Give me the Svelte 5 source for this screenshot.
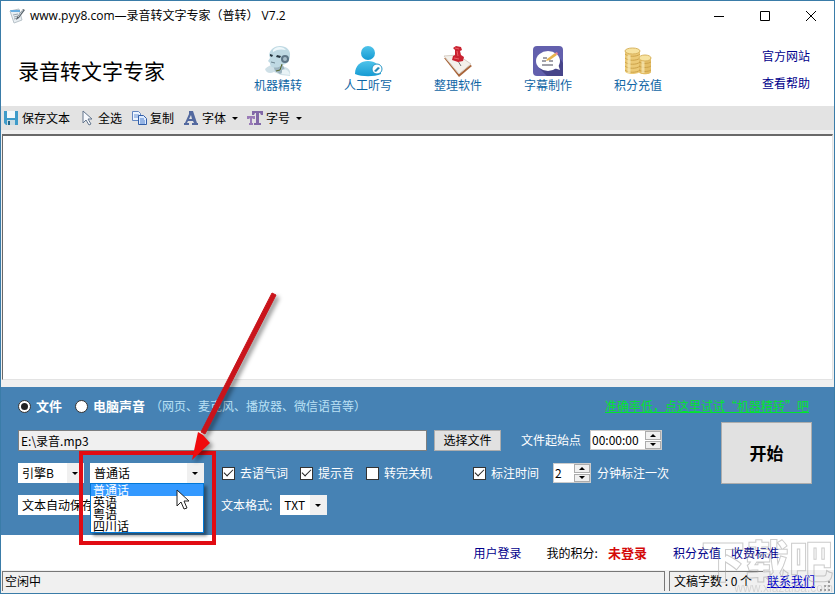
<script>
  const languages = ['普通话', '英语', '粤语', '四川话']

  let language = $state('普通话')
  let open = $state(true)
  let source = $state('file')
  let filePath = $state('E:\\录音.mp3')
  let startAt = $state('00:00:00')
  let interval = $state(2)
  let skipFillers = $state(true)
  let beep = $state(true)
  let shutdown = $state(false)
  let markTime = $state(true)
  let content = $state('')

  function pick(name) {
    language = name
    open = false
  }

  function shiftStart(step) {
    const [h, m, s] = startAt.split(':').map(Number)
    const total = Math.max(0, h * 3600 + m * 60 + s + step)
    startAt = [Math.floor(total / 3600), Math.floor(total / 60) % 60, total % 60]
      .map((n) => String(n).padStart(2, '0'))
      .join(':')
  }
</script>

{#snippet spinner(up, down)}
  <span class="spin">
    <button type="button" aria-label="增加" onclick={up}><i class="tri tri--up"></i></button>
    <button type="button" aria-label="减少" onclick={down}><i class="tri"></i></button>
  </span>
{/snippet}

<div class="window">
  <header class="titlebar">
    <svg width="16" height="16" viewBox="0 0 16 16" aria-hidden="true">
      <path d="M1 3 10 1l3 11-8 3z" fill="#e8eef2" stroke="#b9c3ca" />
      <path d="M1 2h10v2H2z" fill="#69aee0" />
      <path d="m4 7 5-1M5 9l4-1M5 11l4-1" stroke="#9aa6ae" />
      <path d="m7 12 1-3 6-8 2 1-6 8z" fill="#59636b" />
      <path d="m9 9 5-7" stroke="#c9d2d8" />
    </svg>
    <span class="titlebar__text">www.pyy8.com—录音转文字专家（普转） V7.2</span>
    <div class="titlebar__controls">
      <button type="button" aria-label="最小化">
        <svg width="12" height="12"><path d="M1 6.5h10" stroke="#000" /></svg>
      </button>
      <button type="button" aria-label="最大化">
        <svg width="12" height="12"><path d="M1.5 1.5h9v9h-9z" fill="none" stroke="#000" /></svg>
      </button>
      <button type="button" aria-label="关闭">
        <svg width="12" height="12"><path d="m1 1 10 10M11 1 1 11" stroke="#000" /></svg>
      </button>
    </div>
  </header>

  <div class="banner">
    <h1>录音转文字专家</h1>
    <nav class="features">
      <a href="#robot">
        <svg width="32" height="32" viewBox="0 0 32 32" aria-hidden="true">
          <path d="M3 24c3-4 9-5 13-4l7 2c4 1 6 4 5 9l-9-1-7-3c-4 2-8 1-9-3z" fill="#cfe0e7" />
          <path d="M11 20c4 2 6 1 9-2l3 7-5 4-5-3z" fill="#9db4bf" />
          <path d="M7 10C8 4 13 1 18 1c6 0 11 4 10 10 0 5-4 9-8 9-3 3-7 3-10 2-2-1-2-3-2-4l-2-2 2-3z" fill="#bfd9e3" />
          <path d="M11 5c3-4 10-4 13 0-4-1-9-1-13 2z" fill="#eff8fb" />
          <path d="m8 9 3 1-1 2-2-1zm7 1 4 1-1 2-4-1z" fill="#25343e" />
          <path d="m9 17 4 1" stroke="#6c8490" />
          <circle cx="23" cy="14" r="4" fill="#5d7586" />
          <circle cx="23" cy="14" r="2" fill="#a7bdca" />
          <path d="m20 19-2 6-4 1" fill="none" stroke="#56672c" stroke-width="1" />
          <path d="M20 25c3-2 7 0 8 5l-8-1z" fill="#e9f3f6" />
        </svg>
        机器精转
      </a>
      <a href="#manual">
        <svg width="32" height="32" viewBox="0 0 32 32" aria-hidden="true">
          <defs>
            <linearGradient id="person" x2="0" y2="1">
              <stop stop-color="#4fc3ea" /><stop offset="1" stop-color="#159bd3" />
            </linearGradient>
          </defs>
          <circle cx="16" cy="8" r="7" fill="url(#person)" />
          <path d="M3 29c0-9 6-13 13-13s13 4 13 13c-7 3-19 3-26 0z" fill="url(#person)" />
          <circle cx="25" cy="24" r="5" fill="#fff" stroke="#2998c7" />
          <path d="m22 26 4-4 2 1-4 4z" fill="#2488b5" />
        </svg>
        人工听写
      </a>
      <a href="#tidy">
        <svg width="32" height="32" viewBox="0 0 32 32" aria-hidden="true">
          <path d="m2 13 14-1 14 9-13 11z" fill="#a9653a" />
          <path d="m2 11 14-1 13 9-12 10z" fill="#f4f1eb" stroke="#d7cec5" />
          <path d="m16 16 3 5" stroke="#777" />
          <path d="m11 3 3-2 5 1 1 3-2 1 1 4 3 2-1 4-5 1-6-2 1-4 2-1v-5z" fill="#c92230" />
          <path d="m13 3 4 1M15 6l1 5M12 13l5 1" stroke="#ec6066" />
        </svg>
        整理软件
      </a>
      <a href="#subtitle">
        <svg width="32" height="32" viewBox="0 0 32 32" aria-hidden="true">
          <rect x="1" y="1" width="30" height="30" rx="4" fill="#6360ad" />
          <path d="m7 23 8 8h16V18l-4-6z" fill="#47458a" />
          <ellipse cx="16" cy="16" rx="12" ry="10" fill="#fff" />
          <path d="m22 23 6 2-2-6z" fill="#fff" />
          <path d="M11 13h4m-5 3h4m3 0h4m-11 4h11" stroke="#434353" />
          <path d="m15 14 8-6 2 2-7 5-4 1z" fill="#e7b34c" />
          <path d="m23 8 2-1 1 2-1 1z" fill="#ee8190" />
        </svg>
        字幕制作
      </a>
      <a href="#credits">
        <svg width="32" height="32" viewBox="0 0 32 32" aria-hidden="true">
          <path d="M3 6v20c0 4 15 4 15 0V6z" fill="#ecca76" />
          <path d="M17 13v14c0 3 12 3 12 0V13z" fill="#e3bd65" />
          <path d="M3 9c3 3 12 3 15 0M3 13c3 3 12 3 15 0M3 17c3 3 12 3 15 0M3 21c3 3 12 3 15 0M3 25c3 3 12 3 15 0M17 17c3 2 9 2 12 0M17 21c3 2 9 2 12 0M17 25c3 2 9 2 12 0" fill="none" stroke="#cda34a" />
          <path d="M7 10v18M21 16v12" stroke="#faedbd" stroke-width="3" opacity="0.7" />
          <ellipse cx="10.5" cy="6" rx="7.5" ry="3" fill="#f7e3a0" stroke="#d9b45f" />
          <ellipse cx="23" cy="13" rx="6" ry="3" fill="#f7e3a0" stroke="#d9b45f" />
        </svg>
        积分充值
      </a>
    </nav>
    <div class="banner__links">
      <a href="#site">官方网站</a>
      <a href="#help">查看帮助</a>
    </div>
  </div>

  <div class="toolbar" role="toolbar">
    <button type="button">
      <svg width="16" height="16" viewBox="0 0 16 16" aria-hidden="true">
        <path d="M1 1h14v14H3l-2-2z" fill="#3e9bc9" />
        <path d="M4 1h8v7H4z" fill="#f3f8fa" />
        <path d="M4 10h8v5H4z" fill="#c8dbe3" /><path d="M5 11h2v4H5z" fill="#23668a" />
      </svg>
      保存文本
    </button>
    <button type="button">
      <svg width="16" height="16" viewBox="0 0 16 16" aria-hidden="true">
        <path d="M4 1v12l3-3 3 5 2-1-3-5h4z" fill="#f7f9fd" stroke="#62758d" />
      </svg>
      全选
    </button>
    <button type="button">
      <svg width="16" height="16" viewBox="0 0 16 16" aria-hidden="true">
        <path d="M1.5 1.5h6l2 2v7h-8z" fill="#edf5ff" stroke="#6387c1" />
        <path d="M3 5h5M3 7h5" stroke="#6a93d3" />
        <path d="M7.5 5.5h5l3 3v6h-8z" fill="#dceaff" stroke="#315ea8" />
        <path d="M9 9h4m-4 2h5m-5 2h5" stroke="#4f7ec9" />
      </svg>
      复制
    </button>
    <button type="button">
      <svg width="16" height="16" viewBox="0 0 16 16" aria-hidden="true">
        <path d="M6 1h4l4 12h1v2H9v-2h2l-1-2H5l-1 2h2v2H1v-2h1L6 4zm2 4-2 4h3z" fill="#53699f" />
      </svg>
      字体<i class="tri"></i>
    </button>
    <button type="button">
      <svg width="16" height="16" viewBox="0 0 16 16" aria-hidden="true">
        <path d="M5 1h11v4h-2l-1-2h-1v10h2v2H7v-2h2V3H8L7 5H5z" fill="#8268a8" />
        <path d="M0 6h8v3H6L5 8v5h1v2H2v-2h1V8L2 9H0z" fill="#9a7bb8" />
      </svg>
      字号<i class="tri"></i>
    </button>
  </div>

  <textarea class="editor" aria-label="文本" bind:value={content}></textarea>

  <main class="panel">
    <div class="row row--source">
      <label class="bold"><input type="radio" value="file" bind:group={source} />文件</label>
      <label class="bold"><input type="radio" value="system" bind:group={source} />电脑声音</label>
      <span class="hint">（网页、麦克风、播放器、微信语音等）</span>
      <a class="tip" href="#robot">准确率低，点这里试试“机器精转”吧</a>
    </div>

    <div class="panel__body">
      <div class="settings">
        <div class="row row--file">
          <input class="path" type="text" aria-label="文件路径" bind:value={filePath} />
          <button class="btn" type="button">选择文件</button>
          <label class="start-label" for="start-at">文件起始点</label>
          <span class="stepper stepper--time">
            <input id="start-at" type="text" bind:value={startAt} />
            {@render spinner(() => shiftStart(1), () => shiftStart(-1))}
          </span>
        </div>

        <div class="row row--options">
          <span class="select select--engine">
            <select aria-label="引擎"><option>引擎B</option><option>引擎A</option></select>
            <i class="tri"></i>
          </span>
          <div class="combo">
            <button
              class="combo__value"
              type="button"
              aria-haspopup="listbox"
              aria-expanded={open}
              onclick={() => (open = !open)}
            >
              {language}<i class="tri"></i>
            </button>
            {#if open}
              <div class="combo__list" role="listbox" aria-label="语言">
                {#each languages as name}
                  <button
                    type="button"
                    role="option"
                    aria-selected={name === language}
                    class:active={name === language}
                    onclick={() => pick(name)}>{name}</button
                  >
                {/each}
              </div>
            {/if}
            <span class="highlight"></span>
            <svg class="pointer" width="14" height="21" viewBox="0 0 14 21" aria-hidden="true">
              <path d="M1 1v16l4-4 3 7 3-1-3-7h5z" fill="#fff" stroke="#222" />
            </svg>
            <svg class="arrow" width="100" height="180" viewBox="0 0 100 180" aria-hidden="true">
              <path d="m92 9-2-1-71 139 4 2L94 10z" fill="#c9141b" stroke="#c9141b" stroke-linejoin="round" />
              <path d="m10 175 6-28 5 3 7 8z" fill="#f00a0c" />
            </svg>
          </div>
          <div class="checks">
            <label><input type="checkbox" bind:checked={skipFillers} />去语气词</label>
            <label><input type="checkbox" bind:checked={beep} />提示音</label>
            <label><input type="checkbox" bind:checked={shutdown} />转完关机</label>
          </div>
          <div class="marks">
            <label><input type="checkbox" bind:checked={markTime} />标注时间</label>
            <span class="stepper stepper--count">
              <input id="interval" type="text" bind:value={interval} />
              {@render spinner(() => interval++, () => (interval = Math.max(1, interval - 1)))}
            </span>
            <label for="interval">分钟标注一次</label>
          </div>
        </div>

        <div class="row row--format">
          <span class="select select--save">
            <select aria-label="自动保存"><option>文本自动保存</option></select>
            <i class="tri"></i>
          </span>
          <label for="format">文本格式:</label>
          <span class="select select--format">
            <select id="format"><option>TXT</option><option>DOC</option></select>
            <i class="tri"></i>
          </span>
        </div>
      </div>
      <button class="btn btn--start" type="button">开始</button>
    </div>
  </main>

  <div class="account">
    <a href="#login">用户登录</a>
    <span class="account__credits">我的积分: <strong>未登录</strong></span>
    <a href="#credits">积分充值</a>
    <a href="#pricing">收费标准</a>
  </div>

  <footer class="status">
    <span class="status__cell status__cell--main">空闲中</span>
    <span class="status__cell status__cell--count">文稿字数 : {content.length} 个</span>
    <a href="#contact">联系我们</a>
    <svg class="grip" width="12" height="12" aria-hidden="true">
      <path d="M9 1h2v2H9zM5 5h2v2H5zm4 0h2v2H9zM1 9h2v2H1zm4 0h2v2H5zm4 0h2v2H9z" fill="#999" />
    </svg>
  </footer>

  <div class="watermark" aria-hidden="true">
    <span class="watermark__name">下载吧</span>
    <span class="watermark__url">www.xiazaiba.com</span>
  </div>
</div>

<style>
  :global(body) {
    margin: 0;
    background: #fff;
  }

  .window,
  .window * {
    box-sizing: border-box;
  }

  .window {
    position: relative;
    display: flex;
    flex-direction: column;
    min-height: 100vh;
    overflow: hidden;
    border: 1px solid #3a7ca8;
    background: #fff;
    color: #000;
    font: 12px/16px 'Noto Sans CJK SC', sans-serif;
  }

  button,
  input,
  select,
  textarea {
    margin: 0;
    padding: 0;
    border: 0;
    border-radius: 0;
    background: none;
    color: inherit;
    font: inherit;
  }

  a {
    color: #00008b;
    text-decoration: none;
  }

  label {
    display: flex;
    align-items: center;
    gap: 5px;
    white-space: nowrap;
  }

  .tri {
    width: 0;
    height: 0;
    border: 3px solid transparent;
    border-top-color: #000;
    border-bottom: 0;
  }

  .tri--up {
    border-top: 0;
    border-bottom: 3px solid #000;
  }

  .titlebar {
    display: flex;
    align-items: center;
    height: 30px;
    padding-left: 8px;
  }

  .titlebar__text {
    margin-left: 5px;
    font-family: 'Open Sans', 'Noto Sans CJK SC', sans-serif;
    white-space: pre;
  }

  .titlebar__controls {
    display: flex;
    margin-left: auto;
  }

  .titlebar__controls button {
    display: grid;
    place-items: center;
    width: 46px;
    height: 28px;
  }

  .banner {
    display: flex;
    height: 75px;
    padding: 0 24px 0 17px;
  }

  h1 {
    margin: 23px 0 0;
    font-size: 21px;
    font-weight: 400;
    line-height: 32px;
    white-space: nowrap;
  }

  .features {
    display: flex;
    margin: 14px 0 0 68px;
  }

  .features a {
    display: flex;
    flex-direction: column;
    align-items: center;
    width: 90px;
    color: #1066a5;
  }

  .banner__links {
    display: flex;
    flex-direction: column;
    gap: 11px;
    margin: 17px 0 0 auto;
  }

  .toolbar {
    display: flex;
    align-items: center;
    gap: 9px;
    height: 24px;
    padding-left: 2px;
    background: #e3e3e3;
  }

  .toolbar button {
    display: flex;
    align-items: center;
    gap: 3px;
  }

  .toolbar .tri {
    margin-left: 3px;
  }

  .editor {
    flex: 1;
    min-height: 120px;
    margin: 4px 1px 0;
    padding: 4px;
    border: 1px solid #e3e3e3;
    border-top: 2px solid #696969;
    border-left-color: #696969;
    outline: 0;
    resize: none;
  }

  .toolbar + .editor {
    box-shadow: 0 0 0 8px #f0f0f0;
    clip-path: inset(-4px -1px -7px -1px);
  }

  .panel {
    margin-top: 7px;
    padding: 9px 22px 20px 17px;
    background: #4682b4;
    color: #fff;
  }

  .row {
    display: flex;
    align-items: center;
  }

  .row--source {
    height: 20px;
  }

  .bold {
    margin-right: 13px;
    font-size: 13px;
    font-weight: 700;
  }

  .bold + .hint {
    margin-left: -8px;
    color: #b9e0f5;
  }

  .tip {
    margin: 0 3px 0 auto;
    color: #00e62c;
    text-decoration: underline;
  }

  .panel__body {
    display: flex;
    align-items: flex-start;
    gap: 50px;
    margin-top: 6px;
  }

  .settings {
    display: flex;
    flex: 1;
    flex-direction: column;
    gap: 12px;
    padding-top: 7px;
  }

  .row--file {
    height: 22px;
    padding-right: 9px;
  }

  input[type='radio'],
  input[type='checkbox'] {
    display: grid;
    place-items: center;
    width: 13px;
    height: 13px;
    border: 1px solid #333;
    background: #fff;
    appearance: none;
  }

  input[type='radio'] {
    border-radius: 50%;
  }

  input[type='radio']:checked::after {
    width: 7px;
    height: 7px;
    border-radius: 50%;
    background: #222;
    content: '';
  }

  input[type='checkbox']:checked::after {
    width: 8px;
    height: 4px;
    margin-bottom: 3px;
    border: solid #222;
    border-width: 0 0 1px 1px;
    content: '';
    transform: rotate(-45deg);
  }

  .path {
    flex: 1;
    min-width: 0;
    height: 21px;
    padding: 0 2px;
    border: 1px solid #7d7f80;
    background: #f0f0f0;
    color: #000;
  }

  .btn {
    width: 67px;
    height: 21px;
    margin-left: 7px;
    border: 1px solid #adadad;
    background: #e1e1e1;
    color: #000;
    white-space: nowrap;
  }

  .btn--start {
    width: 91px;
    height: 62px;
    margin-left: 0;
    font-size: 17px;
    font-weight: 700;
  }

  .start-label {
    margin: 0 9px 0 20px;
  }

  .stepper {
    display: flex;
    height: 20px;
    border: 1px solid #ccc;
    background: #fff;
    color: #000;
  }

  .stepper input {
    flex: 1;
    width: 0;
    padding-left: 1px;
  }

  .stepper--time {
    width: 72px;
  }

  .stepper--count {
    width: 38px;
    margin: 0 6px 0 14px;
  }

  .spin {
    display: flex;
    flex-direction: column;
    gap: 1px;
    width: 16px;
  }

  .spin button {
    display: grid;
    flex: 1;
    place-items: center;
    border: 1px solid #acacac;
    background: #f0f0f0;
  }

  .select {
    position: relative;
    display: flex;
    height: 20px;
    background: #fff;
    color: #000;
  }

  .select select {
    width: 100%;
    padding-left: 4px;
    appearance: none;
    background: linear-gradient(#f0f0f0, #f0f0f0) right / 17px 100% no-repeat;
  }

  .select .tri {
    position: absolute;
    top: 9px;
    right: 6px;
    pointer-events: none;
  }

  .select--engine {
    width: 66px;
  }

  .select--save {
    width: 180px;
  }

  .select--format {
    width: 47px;
  }

  .combo {
    position: relative;
    width: 114px;
    margin: 0 18px 0 6px;
    color: #000;
  }

  .combo__value {
    display: flex;
    align-items: center;
    justify-content: space-between;
    width: 100%;
    height: 20px;
    padding: 0 6px 0 4px;
    background: linear-gradient(90deg, #fff calc(100% - 17px), #f0f0f0 0);
  }

  .combo__list {
    position: absolute;
    z-index: 1;
    top: 100%;
    left: 0;
    display: flex;
    flex-direction: column;
    width: 100%;
    border: 1px solid #0078d7;
    background: #fff;
    box-shadow: 3px 3px 3px rgba(0, 0, 0, 0.4);
  }

  .combo__list button {
    height: 12px;
    padding-left: 2px;
    line-height: 12px;
    text-align: left;
  }

  .combo__list .active {
    background: #3399ff;
    color: #fff;
  }

  .highlight {
    position: absolute;
    z-index: 2;
    top: -12px;
    left: -11px;
    width: 137px;
    height: 94px;
    border: 4px solid #e10b12;
    pointer-events: none;
  }

  .pointer {
    position: absolute;
    z-index: 2;
    top: 26px;
    left: 86px;
    pointer-events: none;
  }

  .arrow {
    position: absolute;
    z-index: 3;
    bottom: 18px;
    left: 92px;
    filter: drop-shadow(3px 3px 2px rgba(0, 0, 0, 0.4));
    pointer-events: none;
  }

  .checks {
    display: flex;
    gap: 12px;
  }

  .marks {
    display: flex;
    align-items: center;
    margin: 0 2px 0 auto;
  }

  .row--format label {
    margin: 0 8px 0 23px;
  }

  .account {
    display: flex;
    align-items: center;
    justify-content: flex-end;
    height: 35px;
    padding-right: 55px;
  }

  .account a + a {
    margin-left: 10px;
  }

  .account__credits {
    display: flex;
    gap: 10px;
    margin: 0 26px 0 25px;
  }

  .account strong {
    color: #d40a0a;
    font-size: 13px;
  }

  .status {
    display: flex;
    align-items: center;
    gap: 4px;
    height: 23px;
    padding: 0 3px 1px 1px;
    background: #f0f0f0;
  }

  .status__cell {
    height: 20px;
    padding: 1px 4px;
    border-top: 1px solid #777;
    border-left: 1px solid #777;
    white-space: nowrap;
  }

  .status__cell--main {
    flex: 1;
    padding: 1px 2px;
    border-right: 1px solid #777;
  }

  .status__cell--count {
    min-width: 94px;
  }

  .status a {
    color: #0000c8;
    text-decoration: underline;
  }

  .grip {
    align-self: flex-end;
  }

  .watermark {
    position: absolute;
    right: 1px;
    bottom: 0;
    display: flex;
    flex-direction: column;
    align-items: flex-end;
    color: transparent;
    font-weight: 900;
    opacity: 0.5;
    pointer-events: none;
    -webkit-text-stroke: 1px #999;
  }

  .watermark__name {
    font-size: 44px;
    line-height: 48px;
  }

  .watermark__url {
    color: #bbb;
    font: 12px/10px 'Liberation Sans', sans-serif;
    -webkit-text-stroke: 0;
  }
</style>
